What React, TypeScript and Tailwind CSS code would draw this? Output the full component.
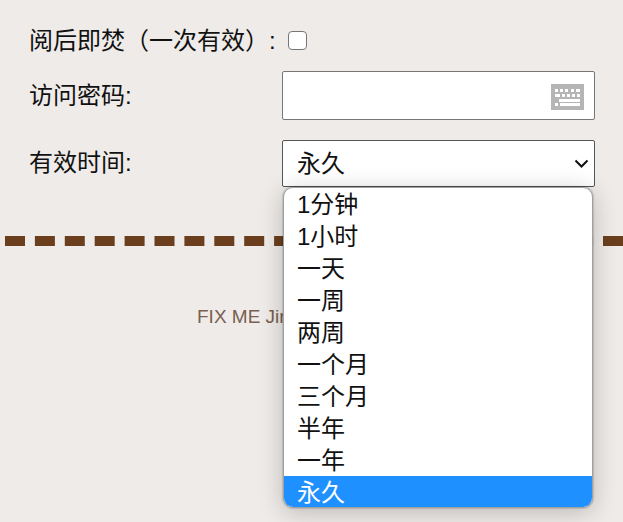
const FONT = "font-['Liberation_Sans','Noto_Sans_CJK_SC',sans-serif]";
const OPTIONS = ["1分钟", "1小时", "一天", "一周", "两周", "一个月", "三个月", "半年", "一年", "永久"];

function KeyboardIcon() {
  return (
    <svg width="33" height="26" viewBox="0 0 33 26" className="absolute right-[10px] top-[12px]">
      <rect width="33" height="26" fill="#b5b5b5" />
      <g fill="#fff">
        <rect x="4" y="5" width="3" height="3" />
        <rect x="9" y="5" width="3" height="3" />
        <rect x="14" y="5" width="3" height="3" />
        <rect x="20" y="5" width="3" height="3" />
        <rect x="25" y="5" width="4" height="3" />
        <rect x="4" y="10" width="5" height="3" />
        <rect x="11" y="10" width="3" height="3" />
        <rect x="16" y="10" width="3" height="3" />
        <rect x="21" y="10" width="3" height="3" />
        <rect x="26" y="10" width="3" height="3" />
        <rect x="8" y="15" width="21" height="3" />
        <rect x="4" y="19" width="3" height="3" />
        <rect x="9" y="19" width="20" height="3" />
      </g>
    </svg>
  );
}

export default function App() {
  return (
    <div className={`${FONT} relative h-[522px] w-[623px] overflow-hidden bg-[#eeebe8] text-[24px] text-[#111]`}>
      <div className="pl-[29px]">
        {/* burn after reading */}
        <div className="flex h-[71px] items-start pt-[25px] leading-[32px]">
          <span>阅后即焚（一次有效）:</span>
          <input
            type="checkbox"
            className="ml-[12px] mt-[6px] h-[19px] w-[19px] appearance-none rounded-[4px] border border-[#767676] bg-white"
          />
        </div>

        {/* password */}
        <div className="flex h-[49px] items-center">
          <label className="w-[253px]">访问密码:</label>
          <div className="relative h-[49px] w-[313px] rounded-[2px] border border-[#767676] bg-white">
            <KeyboardIcon />
          </div>
        </div>

        {/* validity */}
        <div className="mt-[20px] flex h-[47px] items-center">
          <label className="mb-[2px] w-[253px]">有效时间:</label>
          <div className="flex h-[47px] w-[313px] items-center justify-between rounded-[2px] border border-[#555] bg-white pl-[14px] pr-[5px]">
            <span>永久</span>
            <svg width="15" height="9" viewBox="0 0 15 9">
              <path d="M1.5 1.5 7.5 7.5l6-6" fill="none" stroke="#111" strokeWidth="2" />
            </svg>
          </div>
        </div>
      </div>

      {/* open select list */}
      <ul className="absolute left-[283px] top-[187px] z-10 w-[310px] overflow-hidden rounded-[10px] border border-[#a0a0a0] bg-white leading-[34px] shadow-[0_0_1px_1px_rgba(0,0,0,0.12),0_4px_24px_rgba(0,0,0,0.22)]">
        {OPTIONS.map((o) => (
          <li
            key={o}
            className={o === "永久" ? "h-[31px] bg-[#1e90ff] pl-[13px] text-white" : "h-[32px] pl-[13px]"}
          >
            {o}
          </li>
        ))}
      </ul>

      <hr className="ml-[5px] mt-[49px] border-0 border-t-[10px] border-dashed border-[#6b3f1d]" />

      <p className="mt-[60px] pl-[197px] text-[19px] leading-[21px] text-[#7a5f52]">FIX ME Jinja</p>
    </div>
  );
}
